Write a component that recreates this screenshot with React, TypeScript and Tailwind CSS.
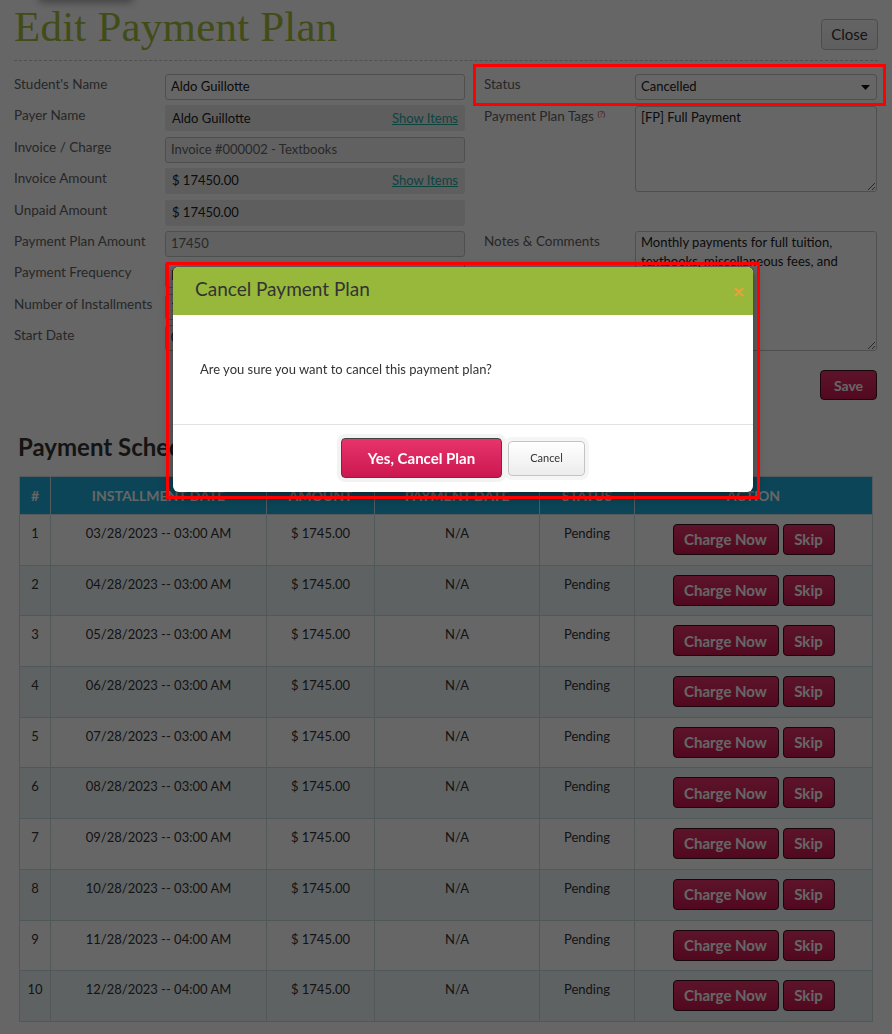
import React from "react";

const schedule = [
  "03/28/2023 -- 03:00 AM",
  "04/28/2023 -- 03:00 AM",
  "05/28/2023 -- 03:00 AM",
  "06/28/2023 -- 03:00 AM",
  "07/28/2023 -- 03:00 AM",
  "08/28/2023 -- 03:00 AM",
  "09/28/2023 -- 03:00 AM",
  "10/28/2023 -- 03:00 AM",
  "11/28/2023 -- 04:00 AM",
  "12/28/2023 -- 04:00 AM",
];

const inputBox =
  "flex h-[26px] w-[300px] items-center rounded-[3px] border border-[#c6c6c6] px-[5px] text-[13px] text-[#222]";
const readBox =
  "flex h-[26px] w-[300px] items-center justify-between rounded-[2px] bg-[#ececec] px-[7px] text-[13px] text-[#222]";
const labelCls = "w-[151px] shrink-0 text-[13.5px] leading-[20px] text-[#626262]";

function Row({ label, children }: { label: string; children: React.ReactNode }) {
  return (
    <div className="flex h-[31.4px]">
      <div className={labelCls}>{label}</div>
      {children}
    </div>
  );
}

function ShowItems() {
  return <span className="text-[13px] text-[#20aa9e] underline">Show Items</span>;
}

const pinkBtn =
  "rounded-[4px] border border-[#3a1020] bg-gradient-to-b from-[#e8336b] to-[#cc1651] font-bold text-white";

const cell = "border border-[#c9dde2] pt-[8px] text-center align-top leading-[20px]";

export default function App() {
  return (
    <div className="relative min-h-[1034px] overflow-hidden bg-white font-['Lato',sans-serif] text-[#333]">
      <div className="px-[14px]">
        <header className="flex h-[61px] items-start justify-between border-b border-dashed border-[#c8c8c8]">
          <h1 className="mt-[5px] font-['Liberation_Serif',serif] text-[43px] font-normal leading-[44px] tracking-[0.2px] text-[#a6bf3f]">
            Edit Payment Plan
          </h1>
          <button className="mt-[19px] h-[31px] w-[57px] rounded-[4px] border border-[#bdbdbd] bg-gradient-to-b from-[#fafafa] to-[#ececec] text-[15px] text-[#333]">
            Close
          </button>
        </header>

        <div className="mt-[13px] flex">
          <div className="w-[451px] shrink-0">
            <Row label="Student's Name">
              <div className={`${inputBox} bg-white`}>Aldo Guillotte</div>
            </Row>
            <Row label="Payer Name">
              <div className={readBox}>
                <span>Aldo Guillotte</span>
                <ShowItems />
              </div>
            </Row>
            <Row label="Invoice / Charge">
              <div className={`${inputBox} bg-[#f2f2f2] text-[#666]`}>Invoice #000002 - Textbooks</div>
            </Row>
            <Row label="Invoice Amount">
              <div className={readBox}>
                <span>$ 17450.00</span>
                <ShowItems />
              </div>
            </Row>
            <Row label="Unpaid Amount">
              <div className={readBox}>
                <span>$ 17450.00</span>
              </div>
            </Row>
            <Row label="Payment Plan Amount">
              <div className={`${inputBox} bg-[#f2f2f2] text-[#666]`}>17450</div>
            </Row>
            <Row label="Payment Frequency">
              <div className={`${inputBox} bg-white`}>Monthly</div>
            </Row>
            <Row label="Number of Installments">
              <div className={`${inputBox} bg-white`}>10</div>
            </Row>
            <Row label="Start Date">
              <div className={`${inputBox} bg-white`}>03/28/2023</div>
            </Row>
          </div>

          <div className="ml-[19px] w-[393px] shrink-0">
            <div className="flex">
              <div className={labelCls}>Status</div>
              <div className="flex h-[26px] w-[242px] items-center justify-between rounded-[3px] border border-[#c6c6c6] bg-white pl-[5px] pr-[6px] text-[13px] text-[#222]">
                <span>Cancelled</span>
                <svg width="9" height="5" viewBox="0 0 9 5">
                  <path d="M0 0h9L4.5 5z" fill="#111" />
                </svg>
              </div>
            </div>
            <div className="mt-[6px] flex">
              <div className={labelCls}>
                Payment Plan Tags <sup className="text-[8px] text-[#c0392b]">(?)</sup>
              </div>
              <textarea
                readOnly
                defaultValue="[FP] Full Payment"
                className="h-[86px] w-[242px] rounded-[3px] border border-[#c6c6c6] bg-white px-[5px] py-[1px] text-[13px] leading-[19px] text-[#222]"
              />
            </div>
            <div className="mt-[39px] flex">
              <div className={labelCls}>Notes &amp; Comments</div>
              <textarea
                readOnly
                defaultValue="Monthly payments for full tuition, textbooks, miscellaneous fees, and activities."
                className="h-[120px] w-[242px] rounded-[3px] border border-[#c6c6c6] bg-white px-[5px] py-[1px] text-[13px] leading-[19px] text-[#222]"
              />
            </div>
            <div className="mt-[19px] flex justify-end">
              <button className={`${pinkBtn} h-[30px] w-[57px] text-[14px]`}>Save</button>
            </div>
          </div>
        </div>

        <h2 className="mt-[33px] pl-[4px] text-[24px] font-bold leading-[28px] text-[#333]">Payment Schedule</h2>

        <table className="ml-[5px] mt-[15px] w-[853px] table-fixed border-collapse text-[13px]">
          <colgroup>
            <col className="w-[31px]" />
            <col className="w-[216px]" />
            <col className="w-[108px]" />
            <col className="w-[165px]" />
            <col className="w-[95px]" />
            <col className="w-[238px]" />
          </colgroup>
          <thead>
            <tr className="h-[38px] bg-[#1cadd9] text-[14px] font-bold uppercase text-white">
              {["#", "Installment Date", "Amount", "Payment Date", "Status", "Action"].map((h) => (
                <th key={h} className="border border-[#cfe4ea] text-center font-bold">
                  {h}
                </th>
              ))}
            </tr>
          </thead>
          <tbody>
            {schedule.map((d, i) => (
              <tr key={d} className={i % 2 === 0 ? "bg-white" : "bg-[#eef6f7]"}>
                <td className={`h-[50.7px] ${cell}`}>{i + 1}</td>
                <td className={cell}>{d}</td>
                <td className={cell}>$ 1745.00</td>
                <td className={cell}>N/A</td>
                <td className={cell}>Pending</td>
                <td className="border border-[#c9dde2] pt-[9px] align-top">
                  <div className="flex justify-center gap-[4px]">
                    <button className={`${pinkBtn} h-[31px] w-[106px] text-[15px]`}>Charge Now</button>
                    <button className={`${pinkBtn} h-[31px] w-[52px] text-[15px]`}>Skip</button>
                  </div>
                </td>
              </tr>
            ))}
          </tbody>
        </table>
      </div>

      {/* shadow of a tab peeking above the page */}
      <div className="absolute left-[38px] top-[-8px] h-[10px] w-[96px] rounded-full bg-black/40 blur-[4px]" />

      {/* dimmed backdrop */}
      <div className="fixed inset-0 bg-black/60" />

      {/* cancel dialog */}
      <div className="absolute left-[173px] top-[267px] w-[580px] overflow-hidden rounded-[6px] bg-white shadow-[0_3px_12px_rgba(0,0,0,0.5)]">
        <div className="flex h-[48px] items-center justify-between bg-[#97b83a] pb-[3px] pl-[22px] pr-[9px]">
          <span className="text-[19px] text-[#333]">Cancel Payment Plan</span>
          <svg width="10" height="10" viewBox="0 0 10 10" className="mt-[5px]">
            <path d="M1.5 1.5l7 7M8.5 1.5l-7 7" stroke="#e9a13a" strokeWidth="2.4" strokeLinecap="round" />
          </svg>
        </div>
        <div className="flex h-[110px] items-center border-b border-[#e2e2e2] pl-[27px] pt-[1px] text-[13px] text-[#333]">
          Are you sure you want to cancel this payment plan?
        </div>
        <div className="flex h-[67px] items-center justify-center gap-[6px] pb-[1px]">
          <button className={`${pinkBtn} h-[40px] w-[161px] border-[#444] text-[15px] shadow-[0_0_0_4px_#f3f3f3]`}>
            Yes, Cancel Plan
          </button>
          <button className="h-[35px] w-[77px] rounded-[4px] border border-[#c4c4c4] bg-gradient-to-b from-white to-[#ececec] text-[11px] text-[#333] shadow-[0_0_0_4px_#f5f5f5]">
            Cancel
          </button>
        </div>
      </div>

      {/* highlight outlines */}
      <div className="absolute left-[473px] top-[64px] h-[42px] w-[413px] border-[3px] border-[#ff0000]" />
      <div className="absolute left-[166px] top-[262px] h-[237px] w-[594px] border-[3px] border-[#ff0000]" />
    </div>
  );
}
